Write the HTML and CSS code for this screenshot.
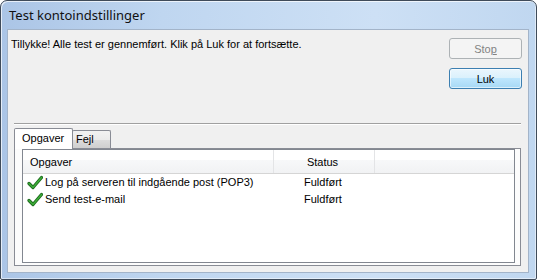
FILE: index.html
```html
<!DOCTYPE html>
<html lang="da">
<head>
    <meta charset="UTF-8">
    <title>Test kontoindstillinger</title>
    <link rel="stylesheet" href="styles.css">
</head>
<body>
    <div class="window">
        <div class="titlebar">Test kontoindstillinger</div>
        <div class="client">
            <div class="top">
                <p class="msg">Tillykke! Alle test er gennemført. Klik på Luk for at fortsætte.</p>
                <div class="buttons">
                    <button class="btn" disabled>Sto<u>p</u></button>
                    <button class="btn default">Luk</button>
                </div>
            </div>
            <div class="sep"></div>
            <div class="tabs">
                <div class="tab active">Opgaver</div>
                <div class="tab">Fejl</div>
            </div>
            <div class="panel">
                <div class="list">
                    <div class="list-head">
                        <div class="col first">Opgaver</div>
                        <div class="col status">Status</div>
                        <div class="col"></div>
                    </div>
                    <div class="row">
                        <div class="cell task">
                            <svg class="tick" width="16" height="16" viewBox="0 0 16 16">
                                <polyline points="2,8.5 6,12.5 14.5,2.5" fill="none" stroke="#1f6b1f" stroke-width="3.2" stroke-linejoin="round" stroke-linecap="round"/>
                                <polyline points="2,8.5 6,12.5 14.5,2.5" fill="none" stroke="#3cae38" stroke-width="1.4" stroke-linejoin="round" stroke-linecap="round"/>
                            </svg>
                            <span>Log på serveren til indgående post (POP3)</span>
                        </div>
                        <div class="cell state">Fuldført</div>
                    </div>
                    <div class="row">
                        <div class="cell task">
                            <svg class="tick" width="16" height="16" viewBox="0 0 16 16">
                                <polyline points="2,8.5 6,12.5 14.5,2.5" fill="none" stroke="#1f6b1f" stroke-width="3.2" stroke-linejoin="round" stroke-linecap="round"/>
                                <polyline points="2,8.5 6,12.5 14.5,2.5" fill="none" stroke="#3cae38" stroke-width="1.4" stroke-linejoin="round" stroke-linecap="round"/>
                            </svg>
                            <span>Send test-e-mail</span>
                        </div>
                        <div class="cell state">Fuldført</div>
                    </div>
                </div>
            </div>
        </div>
    </div>
</body>
</html>
```
FILE: styles.css
```css
body {
    margin: 0;
    font-family: 'Liberation Sans', Arial, sans-serif;
    font-size: 11px;
    color: #000;
}

.window {
    width: 537px;
    height: 280px;
    box-sizing: border-box;
    border: 1px solid #3f4b5a;
    border-radius: 7px 7px 2px 2px;
    background: linear-gradient(to right, #abc5e6, #bfd6f0 30%, #cde0f5 70%, #c0d7f0);
    box-shadow: inset 1px 1px 0 rgba(255, 255, 255, 0.7), inset -1px -1px 0 rgba(255, 255, 255, 0.5);
    padding: 0 7px 6px 6px;
}

.titlebar {
    height: 28px;
    line-height: 28px;
    padding-left: 2px;
    font-family: 'Noto Sans', 'Open Sans', sans-serif;
    font-size: 13px;
    color: #111;
}

.client {
    height: 244px;
    box-sizing: border-box;
    border: 1px solid #a3b4c9;
    background: #f0f0f0;
}

.top {
    display: flex;
    padding: 8px 6px 0 3px;
}

.msg {
    flex: 1;
    margin: 0;
    line-height: 13px;
}

.buttons {
    display: flex;
    flex-direction: column;
    gap: 9px;
}

.btn {
    width: 73px;
    height: 21px;
    padding: 0;
    font-family: 'Liberation Sans', Arial, sans-serif;
    font-size: 11px;
    border: 1px solid #707070;
    border-radius: 3px;
    background: linear-gradient(#f2f2f2, #ebebeb 50%, #dddddd 50%, #cfcfcf);
    color: #000;
}

.btn[disabled] {
    border-color: #adb2b5;
    background: #f4f4f4;
    color: #838383;
}

.btn.default {
    border-color: #3c7fb1;
    background: linear-gradient(#eaf6fd, #d9f0fc 50%, #bee6fd 50%, #a7d9f5);
    box-shadow: inset 0 0 0 1px rgba(255, 255, 255, 0.6);
}

.sep {
    margin: 34px 7px 0 6px;
    border-top: 1px solid #a0a0a0;
    border-bottom: 1px solid #fff;
}

.tabs {
    display: flex;
    align-items: flex-end;
    height: 20px;
    margin: 3px 7px 0 6px;
}

.tab {
    box-sizing: border-box;
    height: 18px;
    line-height: 17px;
    border: 1px solid #898c95;
    border-bottom: none;
    background: linear-gradient(#f2f2f2, #ebebeb 50%, #dddddd 50%, #cfcfcf);
    width: 39px;
    padding-left: 3px;
    margin-left: -1px;
    border-radius: 2px 2px 0 0;
}

.tab.active {
    position: relative;
    z-index: 1;
    height: 21px;
    line-height: 19px;
    width: 59px;
    padding-left: 7px;
    margin-left: 0;
    margin-bottom: -1px;
    background: #fff;
}

.panel {
    height: 118px;
    box-sizing: border-box;
    margin: 0 7px 0 6px;
    padding: 0 5px 2px 7px;
    border: 1px solid #898c95;
    background: #fcfcfc;
}

.list {
    height: 114px;
    box-sizing: border-box;
    border: 1px solid #828790;
    background: #fff;
}

.list-head {
    display: grid;
    grid-template-columns: 251px 101px 1fr;
    height: 24px;
    box-sizing: border-box;
    border-bottom: 1px solid #d5d5d5;
    background: linear-gradient(#fff 45%, #f7f8f9 45%, #f1f2f4);
}

.col {
    padding-top: 6px;
    line-height: 13px;
    border-right: 1px solid #e3e4e6;
}

.col.first {
    padding-left: 7px;
}

.col.status {
    text-align: center;
    padding-right: 3px;
}

.col:last-child {
    border-right: none;
}

.row {
    display: grid;
    grid-template-columns: 252px 1fr;
    height: 17px;
    line-height: 17px;
}

.task {
    display: flex;
    align-items: center;
    padding-left: 4px;
}

.tick {
    margin-right: 2px;
}

.state {
    padding-left: 29px;
}
```
